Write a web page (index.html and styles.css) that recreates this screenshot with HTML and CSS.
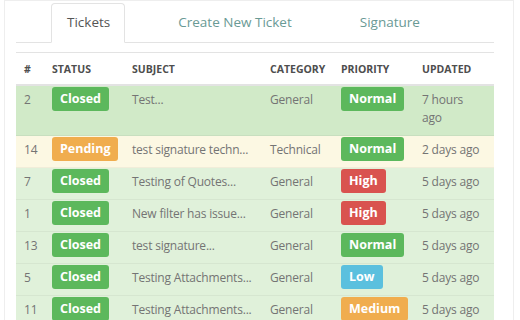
FILE: index.html
```html
<!DOCTYPE html>
<html>
<head>
<meta charset="utf-8">
<link rel="stylesheet" href="styles.css">
</head>
<body>
<div class="frame">
  <ul class="tabs">
    <li class="tab active">Tickets</li>
    <li class="tab">Create New Ticket</li>
    <li class="tab">Signature</li>
  </ul>
  <table class="tickets">
    <colgroup>
      <col class="c-id"><col class="c-status"><col class="c-subject"><col class="c-cat"><col class="c-prio"><col class="c-upd">
    </colgroup>
    <thead>
      <tr><th>#</th><th>Status</th><th>Subject</th><th>Category</th><th>Priority</th><th>Updated</th></tr>
    </thead>
    <tbody>
      <tr class="success hover"><td>2</td><td><span class="badge green">Closed</span></td><td>Test...</td><td>General</td><td><span class="badge green">Normal</span></td><td>7 hours<br>ago</td></tr>
      <tr class="warning"><td>14</td><td><span class="badge orange">Pending</span></td><td>test signature techn...</td><td>Technical</td><td><span class="badge green">Normal</span></td><td>2 days ago</td></tr>
      <tr class="success"><td>7</td><td><span class="badge green">Closed</span></td><td>Testing of Quotes...</td><td>General</td><td><span class="badge red">High</span></td><td>5 days ago</td></tr>
      <tr class="success"><td>1</td><td><span class="badge green">Closed</span></td><td>New filter has issue...</td><td>General</td><td><span class="badge red">High</span></td><td>5 days ago</td></tr>
      <tr class="success"><td>13</td><td><span class="badge green">Closed</span></td><td>test signature...</td><td>General</td><td><span class="badge green">Normal</span></td><td>5 days ago</td></tr>
      <tr class="success"><td>5</td><td><span class="badge green">Closed</span></td><td>Testing Attachments...</td><td>General</td><td><span class="badge blue">Low</span></td><td>5 days ago</td></tr>
      <tr class="success"><td>11</td><td><span class="badge green">Closed</span></td><td>Testing Attachments...</td><td>General</td><td><span class="badge orange">Medium</span></td><td>5 days ago</td></tr>
    </tbody>
  </table>
</div>
</body>
</html>
```
FILE: styles.css
```css
html, body {
  margin: 0;
  padding: 0;
  background: #fff;
  font-family: "Open Sans", "Liberation Sans", sans-serif;
  overflow: hidden;
}
.frame {
  margin: 0 6px 0 4px;
  border: 1px solid #eeeeee;
  border-bottom: none;
  padding: 2px 19px 0 11px;
  height: 330px;
}
.tabs {
  list-style: none;
  margin: 0;
  padding: 0 0 0 35px;
  display: flex;
  border-bottom: 1px solid #e3e3e3;
  height: 39px;
}
.tab {
  padding: 0 14px 0 15px;
  margin-right: 37px;
  font-size: 13.5px;
  line-height: 37px;
  color: #6a9a95;
  border: 1px solid transparent;
  border-radius: 4px 4px 0 0;
  height: 39px;
  box-sizing: border-box;
}
.tab.active {
  color: #555;
  border-color: #e3e3e3;
  border-bottom-color: #fff;
  background: #fff;
  height: 40px;
}
.tickets {
  width: 478px;
  margin-top: 9px;
  border-collapse: collapse;
  table-layout: fixed;
  border-top: 1px solid #e3e3e3;
}
.c-id { width: 28px; }
.c-status { width: 80px; }
.c-subject { width: 138px; }
.c-cat { width: 71px; }
.c-prio { width: 81px; }
.c-upd { width: 80px; }
th {
  text-align: left;
  font-size: 10.5px;
  font-weight: 700;
  text-transform: uppercase;
  color: #4e4e4e;
  padding: 8px 8px 7px;
  line-height: 16px;
  border-bottom: 2px solid #e3e3e3;
  white-space: nowrap;
}
td {
  font-size: 12px;
  letter-spacing: -0.2px;
  color: #747474;
  padding: 5px 8px 8px;
  line-height: 18px;
  vertical-align: top;
  border-top: 1px solid rgba(0, 0, 0, 0.045);
  white-space: nowrap;
}
td:last-child { padding-right: 4px; }
tr.success td { background: #e0f1da; }
tr.success.hover td { background: #d1eac8; }
tr.warning td { background: #fcf8e3; }
.badge {
  display: inline-block;
  font-size: 12.5px;
  letter-spacing: 0;
  font-weight: 700;
  color: #fff;
  line-height: 24px;
  padding: 0 8px;
  margin: -4px 0 -2px;
  border-radius: 3px;
  vertical-align: top;
}
.green { background: #5cb85c; }
.orange { background: #f0ad4e; }
.red { background: #d9534f; }
.blue { background: #5bc0de; }
```
